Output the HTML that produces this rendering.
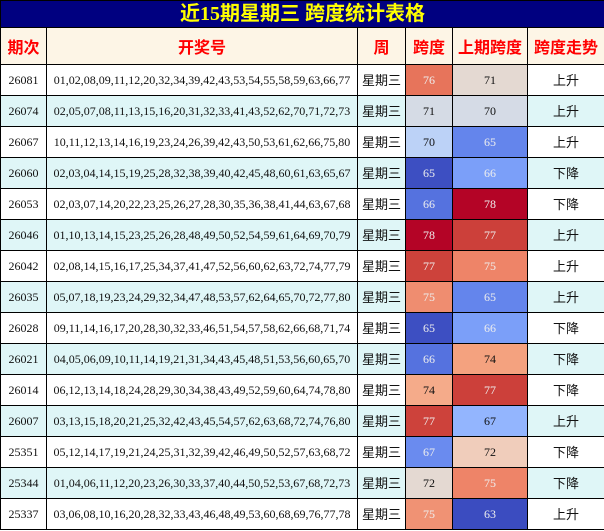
<!DOCTYPE html>
<html><head><meta charset="utf-8"><style>
body{margin:0;width:604px;height:531px;overflow:hidden;background:#fff;}
table{border-collapse:collapse;width:604px;table-layout:fixed;}
td,th{border:1px solid #000;text-align:center;padding:0;overflow:hidden;white-space:nowrap;line-height:14px;}
.t{height:26px;background:#000080;color:#ffff00;font:bold 20px "Liberation Serif","Noto Sans CJK SC",sans-serif;line-height:24px;}
th{height:36px;background:#fdf5e6;color:#f00;font:bold 16px "Noto Sans CJK SC",sans-serif;line-height:18px;}
td{height:30px;font:12px "Liberation Serif","Noto Sans CJK SC",serif;color:#111;}
td.w{font:13px "Noto Sans CJK SC",sans-serif;line-height:14px;}
tr.a td{background:#fff}tr.b td{background:#dff6f7}
td.d{color:#eee}
</style></head><body>
<table>
<colgroup><col style="width:46px"><col style="width:311px"><col style="width:48px"><col style="width:47px"><col style="width:75px"><col style="width:77px"></colgroup>
<tr><td colspan="6" class="t">近15期星期三 跨度统计表格</td></tr>
<tr><th>期次</th><th>开奖号</th><th>周</th><th>跨度</th><th>上期跨度</th><th>跨度走势</th></tr>
<tr class="a"><td>26081</td><td>01,02,08,09,11,12,20,32,34,39,42,43,53,54,55,58,59,63,66,77</td><td class="w">星期三</td><td class="d" style="background:#e7745b">76</td><td style="background:#e4d9d2">71</td><td class="w">上升</td></tr>
<tr class="b"><td>26074</td><td>02,05,07,08,11,13,15,16,20,31,32,33,41,43,52,62,70,71,72,73</td><td class="w">星期三</td><td style="background:#d5dbe5">71</td><td style="background:#d5dbe6">70</td><td class="w">上升</td></tr>
<tr class="a"><td>26067</td><td>10,11,12,13,14,16,19,23,24,26,39,42,43,50,53,61,62,66,75,80</td><td class="w">星期三</td><td style="background:#bcd2f7">70</td><td class="d" style="background:#6485ec">65</td><td class="w">上升</td></tr>
<tr class="b"><td>26060</td><td>02,03,04,14,15,19,25,28,32,38,39,40,42,45,48,60,61,63,65,67</td><td class="w">星期三</td><td class="d" style="background:#3d4fc2">65</td><td class="d" style="background:#7b9ff9">66</td><td class="w">下降</td></tr>
<tr class="a"><td>26053</td><td>02,03,07,14,20,22,23,25,26,27,28,30,35,36,38,41,44,63,67,68</td><td class="w">星期三</td><td class="d" style="background:#5572df">66</td><td class="d" style="background:#b40426">78</td><td class="w">下降</td></tr>
<tr class="b"><td>26046</td><td>01,10,13,14,15,23,25,26,28,48,49,50,52,54,59,61,64,69,70,79</td><td class="w">星期三</td><td class="d" style="background:#b40426">78</td><td class="d" style="background:#cc403a">77</td><td class="w">上升</td></tr>
<tr class="a"><td>26042</td><td>02,08,14,15,16,17,25,34,37,41,47,52,56,60,62,63,72,74,77,79</td><td class="w">星期三</td><td class="d" style="background:#cd423b">77</td><td class="d" style="background:#ee8468">75</td><td class="w">上升</td></tr>
<tr class="b"><td>26035</td><td>05,07,18,19,23,24,29,32,34,47,48,53,57,62,64,65,70,72,77,80</td><td class="w">星期三</td><td class="d" style="background:#ef8d70">75</td><td class="d" style="background:#6485ec">65</td><td class="w">上升</td></tr>
<tr class="a"><td>26028</td><td>09,11,14,16,17,20,28,30,32,33,46,51,54,57,58,62,66,68,71,74</td><td class="w">星期三</td><td class="d" style="background:#3d4fc2">65</td><td class="d" style="background:#7b9ff9">66</td><td class="w">下降</td></tr>
<tr class="b"><td>26021</td><td>04,05,06,09,10,11,14,19,21,31,34,43,45,48,51,53,56,60,65,70</td><td class="w">星期三</td><td class="d" style="background:#5572df">66</td><td style="background:#f4a27f">74</td><td class="w">下降</td></tr>
<tr class="a"><td>26014</td><td>06,12,13,14,18,24,28,29,30,34,38,43,49,52,59,60,64,74,78,80</td><td class="w">星期三</td><td style="background:#f5ab8a">74</td><td class="d" style="background:#cc403a">77</td><td class="w">下降</td></tr>
<tr class="b"><td>26007</td><td>03,13,15,18,20,21,25,32,42,43,45,54,57,62,63,68,72,74,76,80</td><td class="w">星期三</td><td class="d" style="background:#cd423b">77</td><td style="background:#93b5fe">67</td><td class="w">上升</td></tr>
<tr class="a"><td>25351</td><td>05,12,14,17,19,21,24,25,31,32,39,42,46,49,50,52,57,63,68,72</td><td class="w">星期三</td><td class="d" style="background:#6a8bef">67</td><td style="background:#f0cdbb">72</td><td class="w">下降</td></tr>
<tr class="b"><td>25344</td><td>01,04,06,11,12,20,23,26,30,33,37,40,44,50,52,53,67,68,72,73</td><td class="w">星期三</td><td style="background:#e4d9d2">72</td><td class="d" style="background:#ee8468">75</td><td class="w">下降</td></tr>
<tr class="a"><td>25337</td><td>03,06,08,10,16,20,28,32,33,43,46,48,49,53,60,68,69,76,77,78</td><td class="w">星期三</td><td class="d" style="background:#f09274">75</td><td class="d" style="background:#3b4cc0">63</td><td class="w">上升</td></tr>
</table>
</body></html>
